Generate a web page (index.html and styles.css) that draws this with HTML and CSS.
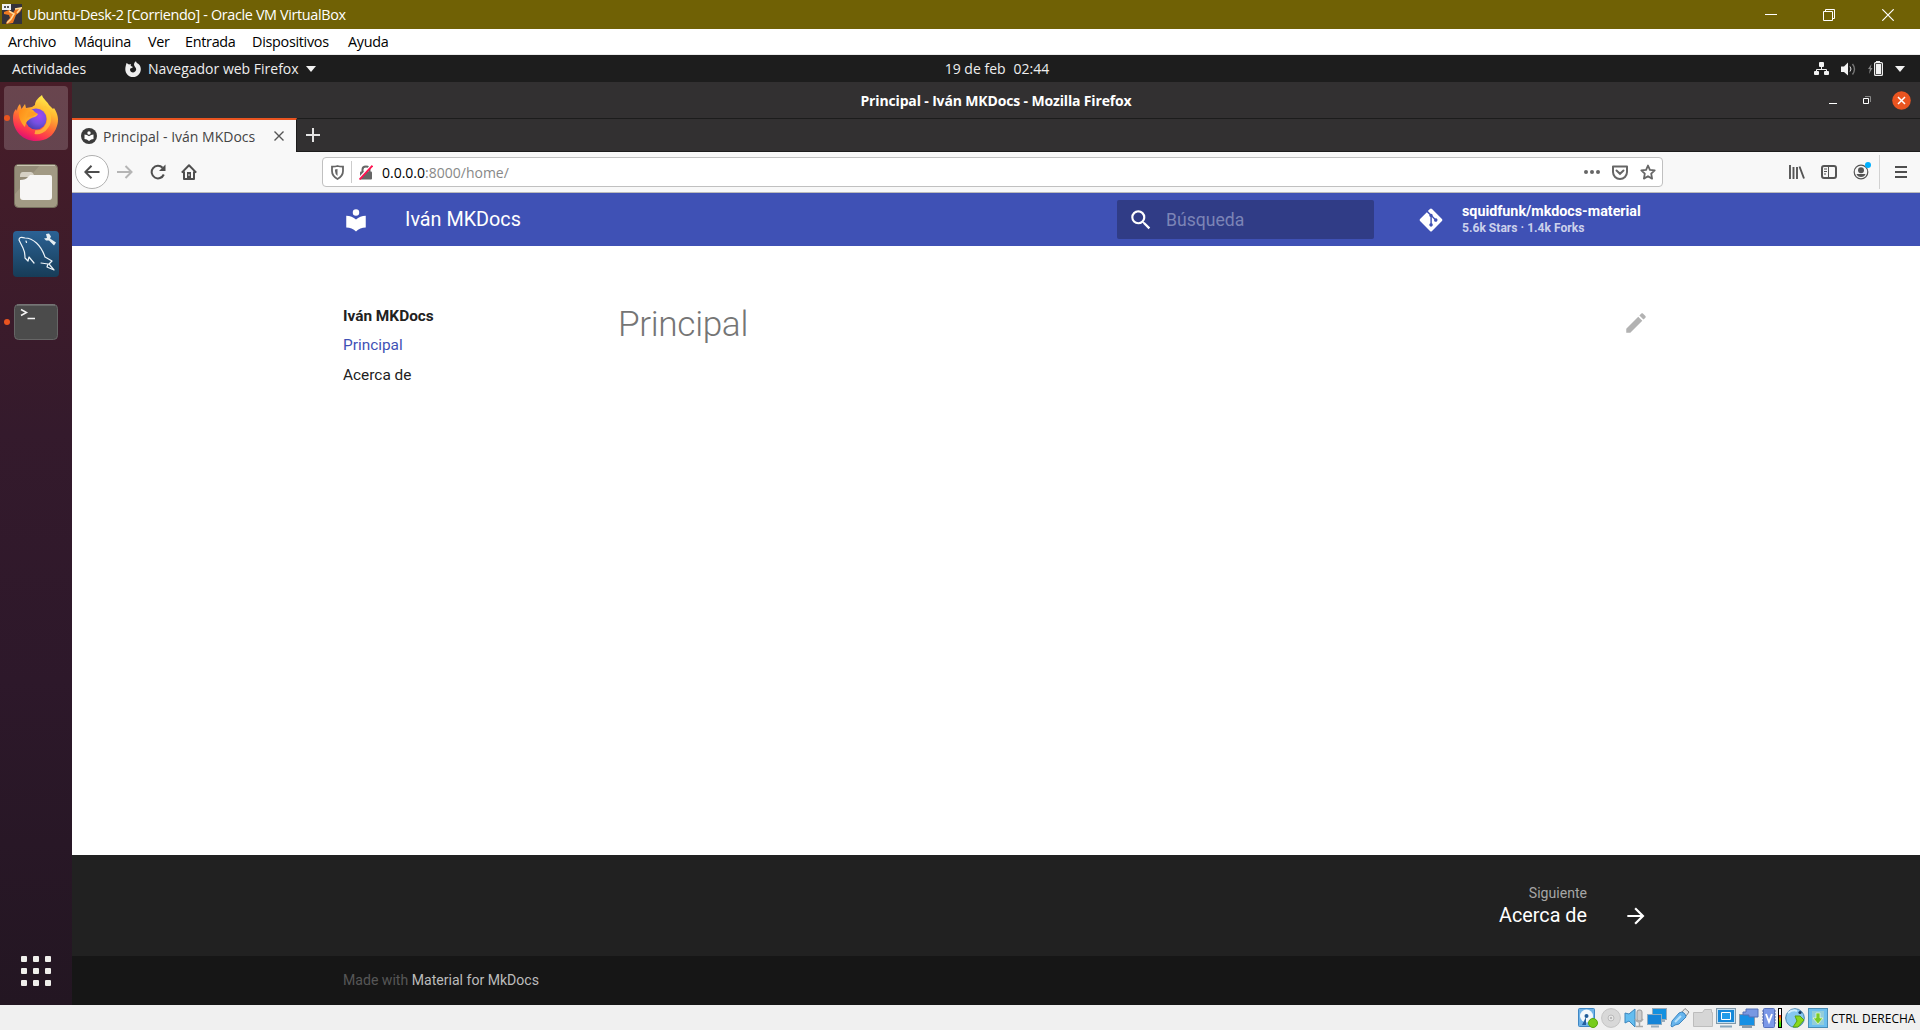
FILE: index.html
```html
<!DOCTYPE html>
<html lang="es">
<head>
<meta charset="utf-8">
<title>Principal - Iván MKDocs</title>
<link rel="stylesheet" href="styles.css">
</head>
<body>
<div class="vm">
  <header class="vm-title">
    <svg class="vm-logo" width="20" height="20" viewBox="0 0 20 20"><rect width="20" height="20" fill="#34323b"/><path d="M2 8l5-2 4 3 3-5h6l-2 4-4 3-3 8-7 1 1-3 3-3-1-3-5-1z" fill="#ef7b22"/><path d="M7 7l5 3-3 5-4 4M13 5l6-1-4 5" stroke="#ffdc9b" stroke-width="1.5" fill="none"/><path d="M0 0h9v6H0z" fill="#eef0f4"/><path d="M2 2h2v2H2zM5 2h2v2H5z" fill="#555"/></svg>
    <span class="vm-name">Ubuntu-Desk-2 [Corriendo] - Oracle VM VirtualBox</span>
    <svg width="12" height="12" class="win-min"><path d="M0 5.5h12" stroke="#fff"/></svg>
    <svg width="12" height="12" class="win-max"><path d="M.5 2.5h9v9h-9zM2.500 2.500v-2h9v9h-2" stroke="#fff" fill="none"/></svg>
    <svg width="12" height="12" class="win-close"><path d="M.3 .3l11.400 11.400M11.700 .3L.3 11.700" stroke="#fff" stroke-width="1.200"/></svg>
  </header>
  <nav class="vm-menu">
    <span class="m1">Archivo</span><span class="m2">Máquina</span><span class="m3">Ver</span><span class="m4">Entrada</span><span class="m5">Dispositivos</span><span class="m6">Ayuda</span>
  </nav>

  <div class="topbar">
    <div class="top-left">
      <span class="activities">Actividades</span>
      <svg class="ff-mono" width="16" height="16" viewBox="0 0 16 16"><path d="M1.500 2L4 3.600 6 3c-1 2 .5 2.500 2 3-1 1.500-3 .8-3 2.500 0 2 1.500 3 3 3s3.200-1.200 3.200-3.200C11.200 6.500 9 5.500 9 3.500 9 2 10 .8 11 .2c.2 1.500 1.500 2.200 2.500 2.800C15 4.300 15.800 6 15.800 8.200 15.800 12.500 12.400 16 8 16S.3 12.500.3 8.200C.3 6 1 4 1.500 2z" fill="#eee"/></svg>
      <span class="app-name">Navegador web Firefox</span>
      <svg width="10" height="6"><path d="M0 0h10L5 6z" fill="#f2f2f2"/></svg>
    </div>
    <div class="clock"><span>19 de feb</span><span class="time">02:44</span></div>
    <div class="top-right">
      <svg width="15" height="14" viewBox="0 0 15 14"><path d="M7.500 4v4M2.500 10V7.500h10V10" stroke="#eee" fill="none"/><g fill="#f2f2f2"><rect x="5" width="5" height="5" rx="1"/><rect y="9" width="5" height="4" rx="1"/><rect x="10" y="9" width="5" height="4" rx="1"/></g></svg>
      <svg width="15" height="14" viewBox="0 0 15 14"><path d="M0 4.500h3L7 .5v13L3 10H0z" fill="#f2f2f2"/><path d="M9 4.500q2 2.500 0 5" stroke="#ddd" fill="none"/><path d="M11.500 2q4 5 0 10.500" stroke="#777" fill="none" stroke-width="1.400"/></svg>
      <svg width="15" height="15" viewBox="0 0 15 15"><path d="M3.500 3L0 8h1.800L1 13l3.500-6H2.700z" fill="#888"/><path d="M8 0h4v2H8z" fill="#eee"/><rect x="6.600" y="1.600" width="7.800" height="12.800" rx="1" fill="none" stroke="#eee" stroke-width="1.200"/><path d="M8 3h5v10H8z" fill="#f2f2f2"/></svg>
      <svg width="10" height="6"><path d="M0 0h10L5 6z" fill="#f2f2f2"/></svg>
    </div>
  </div>

  <div class="desk">
    <aside class="dock">
      <div class="dock-item running active">
        <svg width="46" height="47" viewBox="0 0 46 47">
          <defs>
            <linearGradient id="flame" x1=".75" y1="0" x2=".3" y2="1"><stop offset="0" stop-color="#fff44f"/><stop offset=".32" stop-color="#ffb931"/><stop offset=".6" stop-color="#ff6a35"/><stop offset=".82" stop-color="#fc2f53"/><stop offset="1" stop-color="#d70b78"/></linearGradient>
            <radialGradient id="globe" cx=".65" cy=".35" r=".7"><stop offset="0" stop-color="#a347f5"/><stop offset=".55" stop-color="#7450e0"/><stop offset="1" stop-color="#4c3fb0"/></radialGradient>
            <linearGradient id="body" x1="0" y1="0" x2="1" y2=".5"><stop offset="0" stop-color="#ff8a16"/><stop offset="1" stop-color="#ffbd34"/></linearGradient>
          </defs>
          <path d="M7 9l1.500 5L12 9l1 4 6-1 3-2c0-4 3-7 7-10 1 4 5 6 7 10l4 4 1-1c4 6 5 12 3 18C41 41 33 46 23 46 10 46 0 36 0 23c0-4 1-7 3-9l1 2c0-3 1-5 3-7z" fill="url(#flame)"/>
          <path d="M31 12c5 5 7 13 3 19-3 5-8 7-12 6" fill="none" stroke="#ffc734" stroke-width="4" opacity=".75"/>
          <circle cx="23" cy="24" r="10.500" fill="url(#globe)"/>
          <path d="M6 16c4-3 10-3 14-1 2 2 3 4 5 4-2 4-6 3-8 5-3 2-4 3-5 8-4-4-7-10-6-16z" fill="url(#body)"/>
          <path d="M13 24c3-4 6-1 9-4 2-1 3-1 3-1-3-2-7-3-10-2" fill="#ff9d24"/>
        </svg>
      </div>
      <div class="dock-item files">
        <svg width="44" height="44" viewBox="0 0 44 44"><rect x=".5" y=".5" width="43" height="43" rx="4" fill="#a29a84" stroke="#77705e"/><path d="M4 1h22L1 30V4q0-3 3-3z" fill="#948c78"/><path d="M3 1.500h38" stroke="#cbc5b3"/><path d="M6 12q0-4 3-4h8q2 0 3 3l2 2H6z" fill="#d6d1c5"/><path d="M6 16q6 0 8-3l2-2h20q2 0 2 2v20q0 3-3 3H9q-3 0-3-3z" fill="#f7f6f5"/></svg>
      </div>
      <div class="dock-item mysql">
        <svg width="46" height="46" viewBox="0 0 46 46"><defs><linearGradient id="sea" x1="0" y1="0" x2="0" y2="1"><stop offset="0" stop-color="#2b6295"/><stop offset="1" stop-color="#173c57"/></linearGradient></defs><rect width="46" height="46" rx="4" fill="url(#sea)"/><g stroke="#eef4f8" fill="none" stroke-width="1.200" stroke-linejoin="round" stroke-linecap="round"><path d="M10 17L6 9q0-4 6-2c8 0 16 7 20 19l7 4-3 3 5 6-7-3 1-3-7-1M10 17q2 4 2 10l3 3 1-4 5 6"/><path d="M13 10l.5 1.500"/></g><path d="M33 3l3-.5 2 3-1 2 6 4-2 3-5-5h-3l-2-2 3-.5z" fill="#e5edf2"/></svg>
      </div>
      <div class="dock-item running terminal">
        <svg width="44" height="36" viewBox="0 0 44 36"><rect x=".5" y=".5" width="43" height="35" rx="4" fill="#4b4b4b" stroke="#666"/><path d="M3 1h38" stroke="#858585"/><path d="M7 5.500l5.500 3-5.500 3M13.500 14.500h7.500" fill="none" stroke="#f4f4f4" stroke-width="1.500"/></svg>
      </div>
      <div class="apps"><i></i><i></i><i></i><i></i><i></i><i></i><i></i><i></i><i></i></div>
    </aside>

    <main class="browser">
      <div class="win-title">
        <span class="win-name">Principal - Iván MKDocs - Mozilla Firefox</span>
        <div class="win-buttons">
          <svg width="8" height="8"><path d="M0 7.500h8" stroke="#fff"/></svg>
          <svg width="8" height="8"><path d="M.5 2.500h5v5h-5z" fill="none" stroke="#fff"/><path d="M2 .5h5.500V6" fill="none" stroke="#888"/></svg>
          <svg width="19" height="19"><circle cx="9.500" cy="9.500" r="9.300" fill="#e95420"/><path d="M6 6l7 7M13 6l-7 7" stroke="#fff" stroke-width="1.500"/></svg>
        </div>
      </div>
      <div class="tabs">
        <div class="tab">
          <svg width="16" height="16" viewBox="0 0 16 16"><circle cx="8" cy="8" r="8" fill="#3b3b3b"/><path d="M3.500 6.500Q6 6.500 8 8.200 10 6.500 12.500 6.500V11Q10 11 8 13 6 11 3.500 11z" fill="#fff"/><circle cx="8" cy="5" r="1.700" fill="#fff"/></svg>
          <span class="tab-name">Principal - Iván MKDocs</span>
          <svg width="10" height="10"><path d="M.5 .5l9 9M9.500 .5l-9 9" stroke="#555" stroke-width="1.400"/></svg>
        </div>
        <svg class="plus" width="14" height="14"><path d="M7 0v14M0 7h14" stroke="#e4e4e4" stroke-width="2"/></svg>
      </div>
      <div class="toolbar">
        <span class="back"><svg width="16" height="16" viewBox="0 0 16 16"><path d="M15.500 8H1.500M7.500 1.800L1.300 8l6.200 6.200" fill="none" stroke="#4d4d4d" stroke-width="2"/></svg></span>
        <svg class="forward" width="16" height="16" viewBox="0 0 16 16"><path d="M0 8h14.500M8.500 2l6 6-6 6" fill="none" stroke="#b5b5b5" stroke-width="2"/></svg>
        <svg class="reload" width="16" height="16" viewBox="0 0 16 16"><path d="M13.800 10.500A6.300 6.300 0 1 1 12.600 3.800" fill="none" stroke="#4f4f4f" stroke-width="2"/><path d="M15.500 .5V7H9z" fill="#4f4f4f"/></svg>
        <svg class="home" width="16" height="16" viewBox="0 0 16 16"><path d="M.8 8.600L8 1.300l7.200 7.300M3 7.500V15h10V7.500" fill="none" stroke="#4f4f4f" stroke-width="2" stroke-linejoin="round"/><path d="M6 8h4v7H6z" fill="#4f4f4f"/><path d="M8 10v2" stroke="#eee"/></svg>
        <div class="urlbar">
          <svg width="13" height="15" viewBox="0 0 13 15"><path d="M1 1.700Q4 1.800 6.500 1 9 1.800 12 1.700V6q0 5-5.500 8Q1 11 1 6z" fill="none" stroke="#666" stroke-width="1.800"/><path d="M6.500 4v7Q4 9 4 6V4.500z" fill="#666"/></svg>
          <i class="sep"></i>
          <svg width="14" height="15" viewBox="0 0 14 15"><path d="M3.500 7V4.500q0-3 3.500-3t3.500 3V7" fill="none" stroke="#666" stroke-width="2"/><rect x="1" y="6.500" width="12" height="8" rx="1" fill="#666"/><path d="M-.5 14L12.500 0" stroke="#fff" stroke-width="2"/><path d="M.5 14.500L13.500 .7" stroke="#ff1250" stroke-width="1.900"/></svg>
          <span class="url"><b>0.0.0.0</b>:8000/home/</span>
          <svg class="more" width="16" height="4"><g fill="#666"><circle cx="2" cy="2" r="2"/><circle cx="8" cy="2" r="2"/><circle cx="14" cy="2" r="2"/></g></svg>
          <svg class="pocket" width="16" height="15" viewBox="0 0 16 15"><path d="M1 1.500h14v5.500a7 7 0 0 1-14 0z" fill="none" stroke="#666" stroke-width="2" stroke-linejoin="round"/><path d="M4.500 5.500L8 8.800l3.500-3.300" fill="none" stroke="#666" stroke-width="2" stroke-linecap="round"/></svg>
          <svg class="star" width="16" height="16" viewBox="0 0 16 16"><path d="M8 1.500l1.900 4.400 4.800.5-3.500 3.300.9 4.900L8 12.200l-4.100 2.400.9-4.900L1.300 6.400l4.800-.5z" fill="none" stroke="#666" stroke-width="1.800" stroke-linejoin="round"/></svg>
        </div>
        <div class="tools">
          <svg width="16" height="14" viewBox="0 0 16 14"><path d="M1 0v14M4.500 2v12M8 2v12M10.500 1.500l4.500 12" stroke="#555" stroke-width="1.900"/></svg>
          <svg width="16" height="14" viewBox="0 0 16 14"><rect x="1" y="1" width="14" height="12" rx="2" fill="none" stroke="#555" stroke-width="2"/><path d="M7.500 1v12M3 4h3M3 6.500h3M3 9h2" stroke="#555"/></svg>
          <span class="account"><svg width="16" height="16" viewBox="0 0 16 16"><circle cx="8" cy="8" r="6.800" fill="none" stroke="#555" stroke-width="1.200"/><circle cx="8" cy="6.300" r="3" fill="#555"/><path d="M3.500 10h9Q11.500 13 8 13T3.500 10z" fill="#555"/></svg><i></i></span>
        </div>
        <div class="menu"><svg width="12" height="12"><path d="M0 1h12M0 6h12M0 11h12" stroke="#4f4f4f" stroke-width="2"/></svg></div>
      </div>

      <div class="page">
        <header class="md-header"><div class="md-inner">
          <svg class="md-logo" width="26" height="26" viewBox="0 0 24 24"><path fill="#fff" d="M12 8a3 3 0 0 0 3-3 3 3 0 0 0-3-3 3 3 0 0 0-3 3 3 3 0 0 0 3 3m0 3.540C9.640 9.350 6.500 8 3 8v11c3.500 0 6.640 1.350 9 3.540 2.360-2.190 5.500-3.540 9-3.540V8c-3.500 0-6.640 1.350-9 3.540z"/></svg>
          <span class="md-title">Iván MKDocs</span>
          <div class="search"><svg width="26" height="26" viewBox="0 0 24 24"><path fill="#fff" d="M9.500 3A6.500 6.500 0 0 1 16 9.500c0 1.610-.59 3.090-1.560 4.230l.27.270h.79l5 5-1.500 1.500-5-5v-.79l-.27-.27A6.516 6.516 0 0 1 9.500 16 6.500 6.500 0 0 1 3 9.500 6.500 6.500 0 0 1 9.500 3m0 2C7 5 5 7 5 9.500S7 14 9.500 14 14 12 14 9.500 12 5 9.500 5z"/></svg><span>Búsqueda</span></div>
          <svg class="git" width="24" height="26" viewBox="0 0 448 512"><path fill="#fff" d="M439.550 236.050L244 40.450a28.870 28.870 0 0 0-40.810 0l-40.660 40.630 51.520 51.520c27.060-9.140 52.680 16.770 43.390 43.680l49.660 49.660c34.230-11.800 61.180 31 35.470 56.690-26.490 26.490-70.210-2.870-56-37.340L240.220 199v121.850c25.300 12.540 22.260 41.850 9.080 55a34.340 34.340 0 0 1-48.550 0c-17.570-17.600-11.070-46.910 11.250-56v-123c-20.800-8.510-24.600-30.740-18.640-45L142.570 101 8.450 235.140a28.860 28.860 0 0 0 0 40.810l195.610 195.600a28.860 28.860 0 0 0 40.800 0l194.690-194.690a28.860 28.860 0 0 0 0-40.810z"/></svg>
          <div class="repo"><span>squidfunk/mkdocs-material</span><small>5.6k Stars · 1.4k Forks</small></div>
        </div></header>
        <div class="md-main">
          <nav class="md-nav"><strong>Iván MKDocs</strong><a class="current">Principal</a><a>Acerca de</a></nav>
          <article><h1>Principal</h1><svg width="26" height="26" viewBox="0 0 24 24"><path fill="#b2b2b2" d="M20.710 7.040c.39-.39.39-1.040 0-1.410l-2.340-2.340c-.37-.39-1.020-.39-1.410 0l-1.840 1.830 3.750 3.750M3 17.250V21h3.750L17.810 9.930l-3.750-3.750L3 17.250z"/></svg></article>
        </div>
        <footer>
          <div class="foot-nav"><div class="next"><small>Siguiente</small><span>Acerca de</span></div><svg width="26" height="26" viewBox="0 0 24 24"><path fill="#fff" d="M4 11v2h12l-5.500 5.500 1.420 1.420L19.840 12l-7.920-7.920L10.500 5.500 16 11H4z"/></svg></div>
          <div class="foot-meta">Made with <a>Material for MkDocs</a></div>
        </footer>
      </div>
    </main>
  </div>

  <div class="status">
    <svg width="20" height="20" viewBox="0 0 20 20"><rect x=".5" y=".5" width="16" height="18" rx="1" fill="#6fb3e8" stroke="#3f87c4"/><circle cx="8.500" cy="8" r="6.500" fill="#f2f7fb"/><circle cx="8.500" cy="8" r="2" fill="#1f5c99"/><path d="M8 9l-4 8h4z" fill="#245f9f"/><circle cx="15" cy="15" r="4.500" fill="#77cc1d" stroke="#58a60e"/></svg>
    <svg width="20" height="20" viewBox="0 0 20 20"><circle cx="10" cy="10" r="9.400" fill="#d8d8d8" stroke="#c4c4c4"/><circle cx="10" cy="10" r="3" fill="#e6e6e6" stroke="#bbb"/><circle cx="10" cy="10" r="1" fill="#aaa"/></svg>
    <svg width="20" height="20" viewBox="0 0 20 20"><path d="M1 5l4 1 6-5v18l-6-6-4 2z" fill="#63bdf0" stroke="#3d86bd"/><rect x="13" y="2" width="5" height="11" rx="2" fill="#ccc" stroke="#999"/><path d="M11 11q4 6 8 0M15.500 14v4M12 18.500h7" stroke="#aaa" stroke-width="1.500" fill="none"/></svg>
    <svg width="20" height="20" viewBox="0 0 20 20"><rect x="5.500" y=".5" width="14" height="11" fill="#1491e0" stroke="#9aabb8"/><rect x=".5" y="6.500" width="14" height="10" fill="#1685d8" stroke="#8eabc1"/><path d="M4 18.500h8M14 13h4" stroke="#9aaebd" stroke-width="2"/></svg>
    <svg width="20" height="20" viewBox="0 0 20 20"><path d="M12 4l3-3.500 4 3.500-3 4z" fill="#e6e6e6" stroke="#888"/><path d="M9 5q3-2 5 0t2 4l-7 7-4 1-3 2-1-1 1-5z" fill="#68b5ed" stroke="#3e86c0"/><path d="M5 14l6-6" stroke="#b9e2fa" stroke-width="2"/></svg>
    <svg width="20" height="20" viewBox="0 0 20 20"><path d="M.5 4.500h9l2-3h7v3h1v14H.5z" fill="#d6d6d6" stroke="#bdbdbd"/></svg>
    <svg width="20" height="20" viewBox="0 0 20 20"><rect x=".5" y=".5" width="19" height="15" fill="#c4e0f3" stroke="#8198a8"/><path d="M2 2h16v12H2z" fill="#1788d9"/><path d="M5.500 4.500h9v7h-9z" fill="#209bea" stroke="#fff"/><path d="M4 18.500h12" stroke="#8aa6ba" stroke-width="2"/></svg>
    <svg width="20" height="20" viewBox="0 0 20 20"><rect x=".5" y="6.500" width="15" height="11" fill="#1690e4" stroke="#879bab"/><path d="M3 19h10" stroke="#8a9baa" stroke-width="2"/><path d="M7 1h12v8h-9V7H4V4h3z" fill="#7898e2" stroke="#5371b6"/></svg>
    <div class="chip"><svg width="14" height="20" viewBox="0 0 14 20"><path d="M0 3h14M0 6h14M0 9h14M0 12h14M0 15h14" stroke="#4962b0"/><rect x="1.500" y=".5" width="11" height="19" rx="1" fill="#7b98e7" stroke="#5872bd"/><path d="M4 6l3 8 3-8" fill="none" stroke="#fff" stroke-width="1.800"/></svg><i></i></div>
    <svg width="20" height="20" viewBox="0 0 20 20"><circle cx="10" cy="10" r="9.300" fill="#85c7ee" stroke="#4685b0"/><path d="M3 5q5-4 9-2" stroke="#d0edfb" stroke-width="2" fill="none"/><circle cx="15" cy="4.500" r="1.600" fill="#14375f"/><path d="M10 8h5l4 4-6 7h-5l4-6z" fill="#8ad81b" stroke="#57a113"/></svg>
    <svg width="20" height="20" viewBox="0 0 20 20"><rect x=".5" y=".5" width="19" height="19" fill="#6cbfee" stroke="#498cb4"/><path d="M4 3h12v14H4z" fill="#92cdda"/><path d="M8 5h4v5h3l-5 6-5-6h3z" fill="#78ca28" stroke="#f1ffd8" stroke-width=".7"/></svg>
    <span>CTRL DERECHA</span>
  </div>
</div>
</body>
</html>
```
FILE: styles.css
```css
* { box-sizing: border-box; }
body { margin: 0; overflow: hidden; font-family: "Open Sans", "Noto Sans", sans-serif; white-space: nowrap; }
svg { display: block; flex: none; }
.vm { width: 1920px; height: 1030px; display: flex; flex-direction: column; }

.vm-title { height: 29px; background: #706105; color: #fff; display: flex; align-items: center; padding: 0 26px 0 2px; }
.vm-logo { margin-top: -1px; }
.vm-name { font-size: 14.400px; margin-left: 5px; letter-spacing: -.36px; flex: 1; }
.win-max { margin-left: 46px; }
.win-close { margin-left: 47px; }
.vm-menu { height: 26px; background: #fff; border-bottom: 1px solid #ececec; display: flex; align-items: center; padding-left: 8px; font-size: 14.400px; letter-spacing: -.3px; color: #000; }
.m1 { width: 66px; } .m2 { width: 74px; } .m3 { width: 37px; } .m4 { width: 67px; } .m5 { width: 96px; }

.topbar { height: 27px; background: #1d1d1d; color: #eee; font-size: 14px; display: grid; grid-template-columns: 1fr auto 1fr; align-items: center; }
.top-left { display: flex; align-items: center; padding-left: 12px; }
.activities { width: 113px; }
.app-name { width: 153px; margin: 0 5px 0 7px; }
.clock { display: flex; gap: 8px; padding-left: 74px; }
.clock { margin-right: 0; }
.top-right { display: flex; align-items: center; justify-content: flex-end; padding-right: 15px; gap: 12px; }

.desk { height: 923px; display: flex; }
.dock { width: 72px; background: linear-gradient(#481d28, #341a2c 38%, #2d182a 65%, #231622); display: flex; flex-direction: column; align-items: center; padding-top: 4px; }
.dock-item { width: 64px; display: flex; justify-content: center; align-items: center; position: relative; }
.active { height: 64px; background: rgba(255,255,255,.18); border-radius: 4px; }
.running::before { content: ""; position: absolute; left: 0; top: calc(50% - 3px); width: 6px; height: 6px; border-radius: 50%; background: #e95420; }
.files { margin-top: 14px; }
.mysql { margin-top: 23px; }
.terminal { margin-top: 27px; }
.apps { display: grid; grid-template-columns: repeat(3, 6px); gap: 6px; margin-top: auto; margin-bottom: 19px; }
.apps i { width: 6px; height: 6px; border-radius: 1px; background: #f0efec; }

.browser { flex: 1; display: flex; flex-direction: column; }
.win-title { height: 37px; background: #323031; border-bottom: 1px solid #1c1c1c; display: grid; grid-template-columns: 1fr auto 1fr; align-items: center; color: #fff; }
.win-name { grid-column: 2; font-size: 14px; font-weight: 700; letter-spacing: -.15px; }
.win-buttons { display: flex; justify-content: flex-end; align-items: center; gap: 26px; padding-right: 9px; }
.win-buttons svg:last-child { margin-left: -5px; }
.tabs { height: 33px; background: #323031; border-bottom: 1px solid #1c1c1c; display: flex; align-items: center; }
.tab { width: 225px; height: 34px; margin-top: 0; align-self: flex-end; margin-bottom: -1px; background: #f8f8f8; border-top: 2px solid #e95420; border-right: 1px solid #1c1c1c; display: flex; align-items: center; padding-left: 9px; }
.tab-name { font-size: 14px; color: #444; width: 155px; margin: 0 16px 0 6px; }
.plus { margin-left: 9px; }
.toolbar { height: 41px; background: #f8f8f8; border-bottom: 1px solid #bbb; display: flex; align-items: center; padding-left: 3px; }
.back { width: 34px; height: 34px; border: 1px solid #b0b0b0; border-radius: 50%; background: #fff; display: flex; align-items: center; justify-content: center; }
.forward { margin-left: 8px; }
.reload { margin-left: 17px; }
.home { margin-left: 15px; }
.urlbar { width: 1341px; height: 30px; margin-left: 125px; background: #fff; border: 1px solid #c0c0c0; border-radius: 4px; display: flex; align-items: center; padding: 0 6px 0 8px; }
.sep { width: 1px; height: 22px; background: #ccc; margin: 0 7px; }
.url { font-size: 14px; color: #888; margin-left: 9px; flex: 1; }
.url b { font-weight: 400; color: #000; }
.pocket, .star { margin-left: 12px; }
.tools { display: flex; align-items: center; gap: 16px; margin-left: 126px; padding-right: 10px; }
.account { position: relative; }
.account i { position: absolute; right: -2px; top: -2px; width: 6px; height: 6px; border-radius: 50%; background: #00b0ff; }
.menu { height: 34px; border-left: 1px solid #d2d2d2; display: flex; align-items: center; padding-left: 15px; }

.page { flex: 1; background: #fff; font-family: Roboto, sans-serif; display: flex; flex-direction: column; }
.md-header { height: 53px; background: #3f51b5; color: #fff; }
.md-inner { width: 1342px; height: 53px; margin: 0 auto; display: flex; align-items: center; padding-left: 18px; }
.md-title { font-size: 19.800px; margin-left: 36px; width: 712px; }
.search { width: 257px; height: 39px; background: #303c86; border-radius: 2px; display: flex; align-items: center; padding-left: 11px; font-size: 17.600px; color: #7c84b6; }
.search span { margin-left: 12px; }
.git { margin-left: 45px; }
.repo { margin-left: 19px; font-size: 14.300px; font-weight: 700; line-height: 17px; display: flex; flex-direction: column; }
.repo small { font-size: 12.100px; color: #cbd0eb; line-height: 16px; }
.md-main { width: 1342px; margin: 0 auto; height: 609px; display: flex; padding-left: 18px; }
.md-nav { width: 275px; padding-top: 60px; display: flex; flex-direction: column; font-size: 15.400px; line-height: 20px; color: #212121; }
.md-nav a { margin-top: 10px; }
.md-nav .current { color: #3f51b5; margin-top: 9px; }
article { flex: 1; display: flex; justify-content: space-between; padding: 55px 18px 0 0; }
article svg { margin-top: 9px; }
h1 { margin: 0; font-size: 35.200px; line-height: 46px; font-weight: 300; letter-spacing: -.01em; color: #757575; }
.foot-nav { height: 101px; background: #212121; display: flex; justify-content: flex-end; padding: 29px 271px 0 0; color: #fff; }
.next { text-align: right; display: flex; flex-direction: column; }
.next small { font-size: 14.080px; line-height: 19px; color: #a6a6a6; }
.next span { font-size: 19.800px; line-height: 25px; }
.foot-nav svg { margin: 19px 0 0 36px; }
.foot-meta { height: 49px; background: #161616; color: #565656; font-size: 14.080px; line-height: 49px; padding-left: 271px; }
.foot-meta a { color: #bcbcbc; }

.status { height: 25px; background: #f0f0f0; display: flex; align-items: center; gap: 3px; padding-left: 1578px; padding-top: 1px; font-size: 12px; color: #000; }
.chip { display: flex; gap: 2px; }
.chip i { width: 4px; height: 20px; border: 1px solid #000; background: linear-gradient(#fff 35%, #e22 35%, #fa0 55%, #3d0 80%); }
```
